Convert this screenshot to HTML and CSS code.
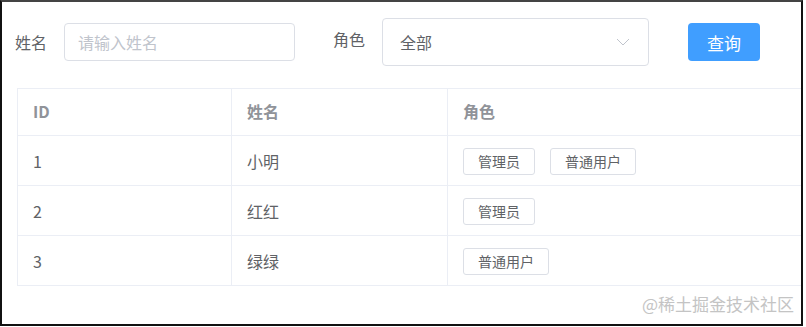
FILE: index.html
```html
<!DOCTYPE html>
<html lang="zh-CN">
<head>
  <meta charset="UTF-8">
  <meta name="viewport" content="width=device-width, initial-scale=1.0">
  <title>用户列表</title>
  <link rel="stylesheet" href="styles.css">
</head>
<body>
  <div class="frame">
    <form class="search">
      <label class="label" for="name">姓名</label>
      <input class="input" id="name" type="text" placeholder="请输入姓名">
      <label class="label label-role">角色</label>
      <div class="select">
        <span>全部</span>
        <svg class="arrow" width="14" height="8" viewBox="0 0 14 8"><path d="M1 1 L7 7 L13 1" fill="none" stroke="#c0c4cc" stroke-width="1"/></svg>
      </div>
      <button class="btn" type="button">查询</button>
    </form>
    <table class="table">
      <colgroup>
        <col class="col-id">
        <col class="col-name">
        <col>
      </colgroup>
      <thead>
        <tr>
          <th>ID</th>
          <th>姓名</th>
          <th>角色</th>
        </tr>
      </thead>
      <tbody>
        <tr>
          <td>1</td>
          <td>小明</td>
          <td><span class="tag">管理员</span><span class="tag">普通用户</span></td>
        </tr>
        <tr>
          <td>2</td>
          <td>红红</td>
          <td><span class="tag">管理员</span></td>
        </tr>
        <tr>
          <td>3</td>
          <td>绿绿</td>
          <td><span class="tag">普通用户</span></td>
        </tr>
      </tbody>
    </table>
    <div class="mark">@稀土掘金技术社区</div>
  </div>
</body>
</html>
```

FILE: styles.css
```css
* {
  box-sizing: border-box;
}
body {
  margin: 0;
  background: #fff;
  font-family: "Noto Sans CJK SC", "Noto Sans", sans-serif;
  color: #606266;
}
.frame {
  width: 803px;
  height: 326px;
  border: 2px solid #111;
  border-top-color: #444;
  overflow: hidden;
}
/* search bar */
.search {
  display: flex;
  align-items: center;
  height: 48px;
  margin: 16px 0 0 13px;
}
.label {
  font-size: 16px;
  line-height: 20px;
  color: #606266;
  margin-right: 17px;
}
.label-role {
  margin: 0 17px 0 38px;
  position: relative;
  top: -3px;
}
.input {
  width: 231px;
  height: 38px;
  border: 1px solid #dcdfe6;
  border-radius: 4px;
  padding: 0 13px;
  font: inherit;
  font-size: 16px;
  color: #606266;
  outline: none;
}
.input::placeholder {
  color: #c0c4cc;
}
.select {
  width: 267px;
  height: 48px;
  border: 1px solid #dcdfe6;
  border-radius: 4px;
  display: flex;
  align-items: center;
  justify-content: space-between;
  padding: 0 18px 0 17px;
  font-size: 16px;
}
.arrow {
  display: block;
}
.btn {
  margin-left: 39px;
  width: 72px;
  height: 38px;
  border: none;
  border-radius: 4px;
  background: #409eff;
  color: #fff;
  font: inherit;
  font-size: 17px;
  cursor: pointer;
}
/* table */
.table {
  margin: 22px 0 0 15px;
  width: 800px;
  border-collapse: collapse;
  font-size: 16px;
}
.col-id {
  width: 214px;
}
.col-name {
  width: 216px;
}
.table th,
.table td {
  border: 1px solid #ebeef5;
  text-align: left;
  padding: 0 15px;
}
.table th {
  height: 47px;
  padding-bottom: 3px;
  color: #909399;
  font-weight: bold;
}
.table td {
  height: 50px;
}
.tag {
  display: inline-block;
  height: 27px;
  line-height: 25px;
  padding: 0 14px;
  margin-right: 15px;
  border: 1px solid #dcdfe6;
  border-radius: 3px;
  font-size: 14px;
  color: #606266;
  vertical-align: middle;
}
.mark {
  text-align: right;
  padding-right: 7px;
  margin-top: 5px;
  font-size: 17px;
  color: #c4c4c4;
}
```
